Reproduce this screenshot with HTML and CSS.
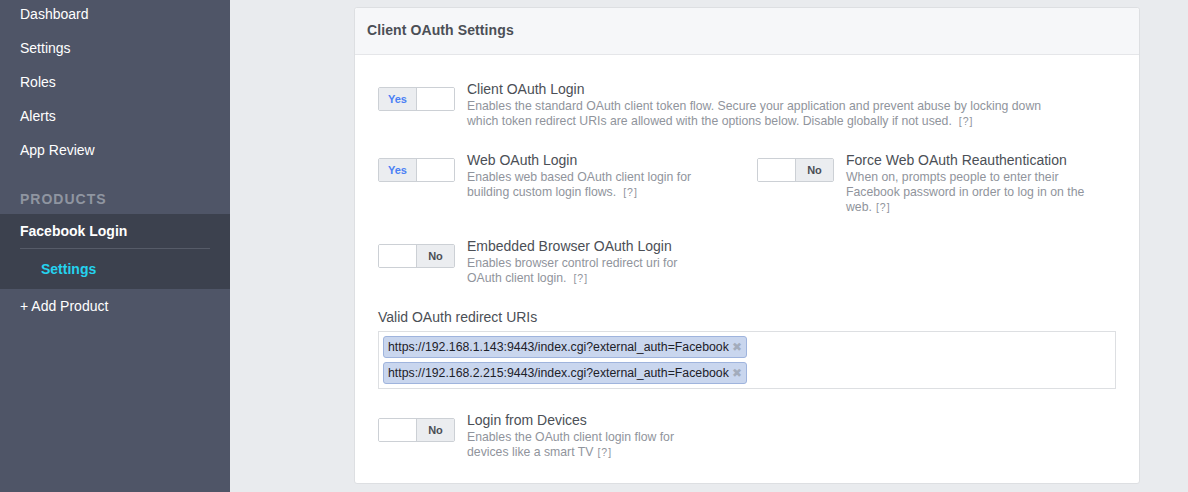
FILE: index.html
```html
<!DOCTYPE html>
<html>
<head>
<meta charset="utf-8">
<link rel="stylesheet" href="styles.css">
</head>
<body>
<div class="page">
  <aside class="sidebar">
    <ul class="nav">
      <li>Dashboard</li>
      <li>Settings</li>
      <li>Roles</li>
      <li>Alerts</li>
      <li>App Review</li>
    </ul>
    <div class="nav-heading">PRODUCTS</div>
    <div class="product">
      <div class="product-title">Facebook Login</div>
      <div class="product-sub">Settings</div>
    </div>
    <div class="nav-add">+ Add Product</div>
  </aside>
  <main class="main">
    <section class="panel">
      <header class="panel-header">Client OAuth Settings</header>
      <div class="panel-body">
        <div class="row">
          <div class="item">
            <div class="toggle on"><span class="half label">Yes</span><span class="half"></span></div>
            <div class="text">
              <div class="title">Client OAuth Login</div>
              <div class="desc wide">Enables the standard OAuth client token flow. Secure your application and prevent abuse by locking down which token redirect URIs are allowed with the options below. Disable globally if not used.<span class="help">[?]</span></div>
            </div>
          </div>
        </div>
        <div class="row two">
          <div class="item">
            <div class="toggle on"><span class="half label">Yes</span><span class="half"></span></div>
            <div class="text">
              <div class="title">Web OAuth Login</div>
              <div class="desc">Enables web based OAuth client login for building custom login flows.<span class="help">[?]</span></div>
            </div>
          </div>
          <div class="item">
            <div class="toggle off"><span class="half"></span><span class="half label">No</span></div>
            <div class="text">
              <div class="title">Force Web OAuth Reauthentication</div>
              <div class="desc">When on, prompts people to enter their Facebook password in order to log in on the web.<span class="help small">[?]</span></div>
            </div>
          </div>
        </div>
        <div class="row">
          <div class="item">
            <div class="toggle off"><span class="half"></span><span class="half label">No</span></div>
            <div class="text">
              <div class="title">Embedded Browser OAuth Login</div>
              <div class="desc">Enables browser control redirect uri for OAuth client login.<span class="help">[?]</span></div>
            </div>
          </div>
        </div>
        <div class="row field">
          <div class="field-label">Valid OAuth redirect URIs</div>
          <div class="tokens">
            <div class="token-line"><span class="token">https://192.168.1.143:9443/index.cgi?external_auth=Facebook<span class="x">✖</span></span></div>
            <div class="token-line"><span class="token">https://192.168.2.215:9443/index.cgi?external_auth=Facebook<span class="x">✖</span></span></div>
          </div>
        </div>
        <div class="row">
          <div class="item">
            <div class="toggle off"><span class="half"></span><span class="half label">No</span></div>
            <div class="text">
              <div class="title">Login from Devices</div>
              <div class="desc">Enables the OAuth client login flow for devices like a smart TV<span class="help small">[?]</span></div>
            </div>
          </div>
        </div>
      </div>
    </section>
  </main>
</div>
</body>
</html>
```

FILE: styles.css
```css
* { box-sizing: border-box; }
html, body { margin: 0; padding: 0; height: 100%; }
body {
  font-family: "Liberation Sans", Arial, Helvetica, sans-serif;
  background: #e9ebee;
  overflow: hidden;
}
.page {
  display: flex;
  height: 492px;
}
.sidebar {
  width: 230px;
  flex: none;
  background: #4f5567;
  color: #fff;
  font-size: 14px;
}
.nav {
  list-style: none;
  margin: -3px 0 0 0;
  padding: 0;
}
.nav li {
  line-height: 34px;
  padding-left: 20px;
}
.nav-heading {
  margin-top: 17px;
  height: 30px;
  line-height: 31px;
  padding-left: 20px;
  color: #8f95a1;
  font-weight: bold;
  letter-spacing: 1px;
}
.product {
  background: #3c414e;
}
.product-title {
  margin: 0 20px;
  line-height: 34px;
  font-weight: bold;
  border-bottom: 1px solid #565b68;
}
.product-sub {
  line-height: 40px;
  padding-left: 41px;
  font-weight: bold;
  color: #24d3ef;
}
.nav-add {
  line-height: 34px;
  padding-left: 20px;
}
.main {
  flex: 1;
  padding: 7px 0 0 124px;
}
.panel {
  width: 786px;
  background: #fff;
  border: 1px solid #dddfe2;
  border-radius: 3px;
}
.panel-header {
  height: 47px;
  line-height: 44px;
  padding: 0 12px;
  background: #f6f7f9;
  border-bottom: 1px solid #e5e6e9;
  border-radius: 3px 3px 0 0;
  font-size: 14px;
  font-weight: bold;
  color: #4b4f56;
  letter-spacing: 0.1px;
}
.panel-body {
  padding: 25px 23px 23px 23px;
}
.row + .row { margin-top: 22px; }
.row.two {
  display: grid;
  grid-template-columns: 379px 1fr;
}
.item {
  display: flex;
  align-items: flex-start;
}
.toggle {
  flex: none;
  margin-top: 7px;
  margin-right: 12px;
  width: 77px;
  height: 24px;
  border: 1px solid #ccd0d5;
  border-radius: 2px;
  display: flex;
  overflow: hidden;
}
.toggle .half {
  flex: 1;
  background: #fff;
  font-size: 11px;
  font-weight: bold;
  text-align: center;
  line-height: 22px;
}
.toggle .half:first-child { border-right: 1px solid #ccd0d5; }
.toggle .half.label { background: #ebedf0; }
.toggle.on .label { color: #4a80f5; }
.toggle.off .label { color: #4b4f56; }
.title {
  font-size: 14px;
  line-height: 19px;
  color: #4b4f56;
}
.desc {
  font-size: 12.25px;
  line-height: 15px;
  color: #90949c;
  max-width: 242px;
}
.desc.wide { max-width: 600px; }
.help {
  margin-left: 7px;
  font-size: 10.5px;
  letter-spacing: 1px;
}
.help.small { margin-left: 4px; }
.field-label {
  font-size: 14px;
  line-height: 18px;
  color: #4b4f56;
}
.tokens {
  margin-top: 5px;
  border: 1px solid #dddfe2;
  padding: 4px 4px 0 4px;
}
.token-line {
  height: 22px;
  margin-bottom: 4px;
}
.token {
  display: inline-block;
  height: 22px;
  line-height: 20px;
  padding: 0 4px 0 4px;
  background: #c9d6ee;
  border: 1px solid #9fb4dd;
  border-radius: 3px;
  font-size: 12.3px;
  color: #1d2129;
}
.token .x {
  margin-left: 3px;
  font-size: 11.5px;
  color: #a3acbc;
}
```
